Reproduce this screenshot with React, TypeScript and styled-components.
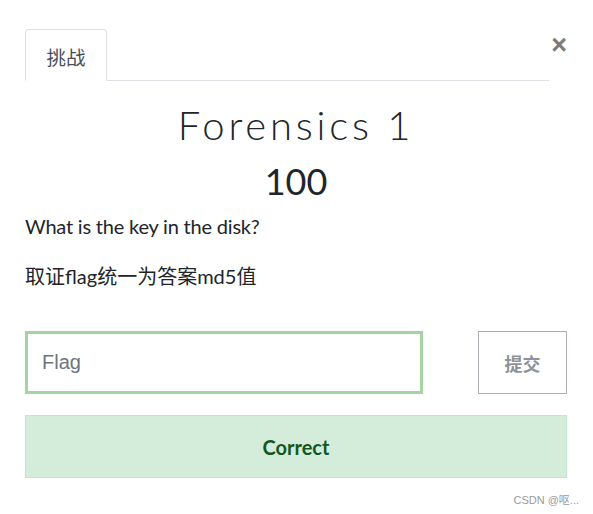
import React from "react";
import styled, { createGlobalStyle } from "styled-components";

const Global = createGlobalStyle`
  html, body { margin: 0; padding: 0; background: #fff; }
  body { font-family: Lato, "Noto Sans CJK SC", sans-serif; color: #212529; }
  * { box-sizing: border-box; }
`;

const Page = styled.div`
  position: relative;
  width: 593px;
  height: 514px;
  padding: 29px 26px 0 25px;
`;

const Header = styled.div`
  display: flex;
  align-items: flex-start;
`;

const Nav = styled.div`
  flex: 1;
  display: flex;
  border-bottom: 1px solid #dee2e6;
`;

const Tab = styled.div`
  width: 82px;
  height: 52px;
  margin-bottom: -1px;
  border: 1px solid #dee2e6;
  border-bottom-color: #fff;
  border-radius: 4px 4px 0 0;
  display: flex;
  align-items: center;
  justify-content: center;
  font-family: Lato, "Noto Sans CJK SC", sans-serif;
  font-size: 19.5px;
  color: #495057;
  padding-top: 2px;
`;

const Close = styled.button`
  width: 18px;
  margin-left: 0;
  margin-top: 1px;
  padding: 0;
  border: none;
  background: none;
  font-family: "Liberation Sans", Arial, sans-serif;
  font-weight: 700;
  font-size: 27px;
  line-height: 30px;
  color: #7a7a7a;
  text-align: right;
`;

const Title = styled.h2`
  margin: 20px 0 0;
  text-align: center;
  font-family: Lato, sans-serif;
  font-weight: 300;
  font-size: 40px;
  line-height: 48px;
  letter-spacing: 3.8px;
  color: #212529;
`;

const Points = styled.h3`
  margin: 10px 0 0;
  text-align: center;
  font-family: Lato, sans-serif;
  font-weight: 400;
  font-size: 36px;
  line-height: 44px;
  color: #212529;
`;

const Desc = styled.p<{ $gap: number; $spacing?: number }>`
  margin: ${(p) => p.$gap}px 0 0;
  font-family: Lato, "Noto Sans CJK SC", sans-serif;
  font-size: 20px;
  line-height: 27px;
  letter-spacing: ${(p) => p.$spacing ?? 0}px;
  color: #212529;
`;

const FormRow = styled.div`
  margin-top: 41px;
  display: flex;
  justify-content: space-between;
`;

const Input = styled.input`
  width: 398px;
  height: 63px;
  border: 3px solid #a4d4a1;
  padding: 0 14px;
  font-family: "Liberation Sans", Arial, sans-serif;
  font-size: 20px;
  color: #495057;
  outline: none;
  &::placeholder { color: #6c757d; }
`;

const Submit = styled.button`
  width: 89px;
  height: 63px;
  border: 1px solid #abafb5;
  background: #fff;
  font-family: "Noto Sans CJK SC", sans-serif;
  font-weight: 700;
  font-size: 18px;
  color: #8e9399;
`;

const Alert = styled.div`
  margin-top: 21px;
  height: 63px;
  background: #d4edda;
  border: 1px solid #c3e6cb;
  display: flex;
  align-items: center;
  justify-content: center;
  font-family: Lato, sans-serif;
  font-weight: 700;
  font-size: 20px;
  color: #155724;
`;

const Watermark = styled.div`
  position: absolute;
  right: 14px;
  bottom: 7px;
  font-family: "Liberation Sans", "Noto Sans CJK SC", sans-serif;
  font-size: 11px;
  color: #9a9a9a;
`;

export default function App() {
  return (
    <>
      <Global />
      <Page>
        <Header>
          <Nav>
            <Tab>挑战</Tab>
          </Nav>
          <Close aria-label="Close">×</Close>
        </Header>
        <Title>Forensics 1</Title>
        <Points>100</Points>
        <Desc $gap={10} $spacing={-0.2}>What is the key in the disk?</Desc>
        <Desc $gap={23}>取证flag统一为答案md5值</Desc>
        <FormRow>
          <Input placeholder="Flag" />
          <Submit>提交</Submit>
        </FormRow>
        <Alert>Correct</Alert>
        <Watermark>CSDN @呕...</Watermark>
      </Page>
    </>
  );
}
